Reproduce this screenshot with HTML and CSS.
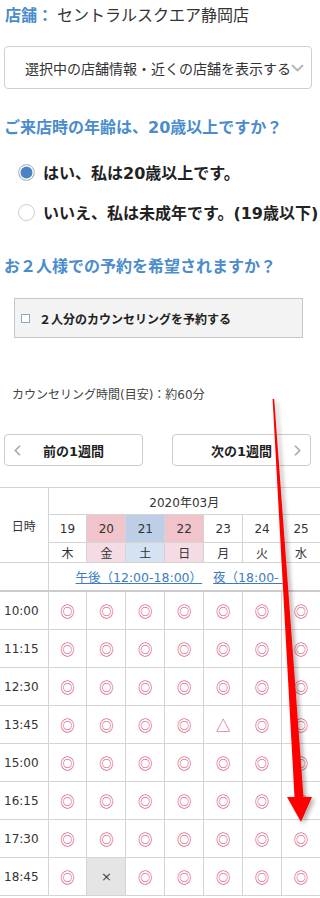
FILE: index.html
```html
<!DOCTYPE html>
<html lang="ja">
<head>
<meta charset="utf-8">
<title>予約</title>
<link rel="stylesheet" href="styles.css">
</head>
<body>
<div class="page">
  <div class="shop"><span class="shop-label">店舗：</span><span class="shop-name">セントラルスクエア静岡店</span></div>
  <div class="select"><span>選択中の店舗情報・近くの店舗を表示する</span><svg class="sel-chev" width="13" height="8" viewBox="0 0 13 8"><path d="M1 1.2 L6.5 6.5 L12 1.2" fill="none" stroke="#b0b0b0" stroke-width="1.8"/></svg></div>

  <h2 class="q">ご来店時の年齢は、20歳以上ですか？</h2>
  <label class="radio"><span class="radio-dot checked"></span>はい、私は20歳以上です。</label>
  <label class="radio"><span class="radio-dot"></span>いいえ、私は未成年です。(19歳以下)</label>

  <h2 class="q q2">お２人様での予約を希望されますか？</h2>
  <div class="pair"><span class="cb"></span>２人分のカウンセリングを予約する</div>

  <p class="note">カウンセリング時間(目安)：約60分</p>

  <div class="weeknav">
    <button class="wbtn"><svg class="chev" width="7" height="11" viewBox="0 0 7 11"><path d="M6 0.8 L1.3 5.5 L6 10.2" fill="none" stroke="#a8a8a8" stroke-width="1.6"/></svg><span class="wtxt">前の1週間</span><span></span></button>
    <button class="wbtn"><span></span><span class="wtxt">次の1週間</span><svg class="chev chev-r" width="7" height="11" viewBox="0 0 7 11"><path d="M1 0.8 L5.7 5.5 L1 10.2" fill="none" stroke="#a8a8a8" stroke-width="1.6"/></svg></button>
  </div>

  <table class="cal">
    <colgroup><col class="c-time"><col><col><col><col><col><col><col></colgroup>
    <tr class="r-month">
      <td class="hd-dt" rowspan="3">日時</td>
      <td class="month" colspan="7">2020年03月</td>
    </tr>
    <tr class="r-date">
      <td>19</td><td class="pk">20</td><td class="bl">21</td><td class="pk">22</td><td>23</td><td>24</td><td>25</td>
    </tr>
    <tr class="r-wd">
      <td>木</td><td class="pk2">金</td><td class="bl2">土</td><td class="pk2">日</td><td>月</td><td>火</td><td>水</td>
    </tr>
    <tr class="r-link">
      <td class="lk-empty"></td>
      <td class="lk" colspan="7"><div class="lk-in"><a href="#">午後（12:00-18:00）</a><a href="#" class="lk2">夜（18:00-&nbsp;</a></div></td>
    </tr>
    <tr class="r-slot"><th>10:00</th><td>◎</td><td>◎</td><td>◎</td><td>◎</td><td>◎</td><td>◎</td><td>◎</td></tr>
    <tr class="r-slot"><th>11:15</th><td>◎</td><td>◎</td><td>◎</td><td>◎</td><td>◎</td><td>◎</td><td>◎</td></tr>
    <tr class="r-slot"><th>12:30</th><td>◎</td><td>◎</td><td>◎</td><td>◎</td><td>◎</td><td>◎</td><td>◎</td></tr>
    <tr class="r-slot"><th>13:45</th><td>◎</td><td>◎</td><td>◎</td><td>◎</td><td class="tri">△</td><td>◎</td><td>◎</td></tr>
    <tr class="r-slot"><th>15:00</th><td>◎</td><td>◎</td><td>◎</td><td>◎</td><td>◎</td><td>◎</td><td>◎</td></tr>
    <tr class="r-slot"><th>16:15</th><td>◎</td><td>◎</td><td>◎</td><td>◎</td><td>◎</td><td>◎</td><td>◎</td></tr>
    <tr class="r-slot"><th>17:30</th><td>◎</td><td>◎</td><td>◎</td><td>◎</td><td>◎</td><td>◎</td><td>◎</td></tr>
    <tr class="r-slot"><th>18:45</th><td>◎</td><td class="full">×</td><td>◎</td><td>◎</td><td>◎</td><td>◎</td><td>◎</td></tr>
  </table>
</div>

<svg class="arrow" width="320" height="898" viewBox="0 0 320 898">
  <defs>
    <filter id="sh" x="-100%" y="-10%" width="300%" height="120%">
      <feGaussianBlur in="SourceAlpha" stdDeviation="2"/>
      <feOffset dx="3" dy="2" result="b"/>
      <feComponentTransfer><feFuncA type="linear" slope="0.3"/></feComponentTransfer>
      <feMerge><feMergeNode/><feMergeNode in="SourceGraphic"/></feMerge>
    </filter>
  </defs>
  <polygon fill="#ff0000" filter="url(#sh)" points="272.6,399 274.2,399 303.5,797 312,797 301,822 287,797 294.5,797"/>
</svg>
</body>
</html>
```

FILE: styles.css
```css
html, body {
  margin: 0;
  padding: 0;
}
body {
  width: 320px;
  overflow: hidden;
  position: relative;
  font-family: "DejaVu Sans", "Noto Sans CJK JP", sans-serif;
  color: #333;
  background: #fff;
}
.page {
  width: 320px;
}
.shop {
  height: 28px;
  line-height: 28px;
  font-size: 16px;
  padding-left: 5px;
  white-space: nowrap;
  font-family: "Noto Sans CJK JP", sans-serif;
}
.shop-label {
  color: #4a8ccd;
  font-weight: bold;
  margin-right: 4px;
}
.shop-name {
  color: #333;
}
.select {
  margin: 18px 0 0 4px;
  width: 308px;
  height: 43px;
  box-sizing: border-box;
  border: 1px solid #cfcfcf;
  border-radius: 4px;
  display: flex;
  align-items: center;
  padding-left: 20px;
  font-size: 14px;
  color: #333;
  white-space: nowrap;
  font-family: "Noto Sans CJK JP", sans-serif;
}
.sel-chev {
  margin-left: 0;
  margin-top: 1px;
  flex: none;
}
.q {
  margin: 27px 0 0 4px;
  font-size: 16px;
  line-height: 24px;
  color: #4a8ccd;
  font-weight: bold;
  white-space: nowrap;
}
.q2 {
  margin-top: 31px;
}
.radio {
  display: flex;
  align-items: center;
  height: 24px;
  margin-top: 20px;
  padding-left: 18px;
  font-size: 16px;
  font-weight: bold;
  color: #222;
  white-space: nowrap;
}
.radio + .radio {
  margin-top: 16px;
}
.radio-dot {
  flex: none;
  width: 17px;
  height: 17px;
  box-sizing: border-box;
  border: 1px solid #cccccc;
  border-radius: 50%;
  margin-right: 8px;
  background: #fff;
}
.radio-dot.checked {
  border-color: #c4c4c4;
  background: #4a84c4;
  box-shadow: inset 0 0 0 1.5px #fff;
}
.pair {
  margin: 19px 0 0 14px;
  width: 289px;
  height: 40px;
  box-sizing: border-box;
  background: #f3f3f3;
  border: 1px solid #c6c6c6;
  display: flex;
  align-items: center;
  padding-left: 6px;
  font-size: 12px;
  font-weight: bold;
  color: #222;
  white-space: nowrap;
  font-family: "Noto Sans CJK JP", sans-serif;
}
.cb {
  flex: none;
  width: 9px;
  height: 9px;
  box-sizing: border-box;
  border: 1px solid #8ea8cc;
  background: #fff;
  margin-right: 9px;
}
.note {
  margin: 47px 0 0 12px;
  font-size: 12px;
  line-height: 20px;
  color: #444;
  white-space: nowrap;
}
.weeknav {
  display: flex;
  gap: 29px;
  margin: 29px 0 0 4px;
}
.wbtn {
  width: 139px;
  height: 32px;
  box-sizing: border-box;
  border: 1px solid #cccccc;
  border-radius: 4px;
  background: #fff;
  padding: 0 9px;
  display: grid;
  grid-template-columns: 1fr auto 1fr;
  align-items: center;
  font-family: "DejaVu Sans", "Noto Sans CJK JP", sans-serif;
  font-size: 13px;
  font-weight: bold;
  color: #222;
}
.chev {
  justify-self: start;
}
.chev-r {
  justify-self: end;
}
.cal {
  margin-top: 21px;
  border-collapse: collapse;
  table-layout: fixed;
  width: 321px;
  font-size: 12px;
  color: #333;
}
.c-time {
  width: 48px;
}
.cal td, .cal th {
  border: 1px solid #d4d4d4;
  padding: 0;
  text-align: center;
  font-weight: normal;
}
.cal tr > :first-child {
  border-left: none;
}
.r-month td {
  height: 26px;
}
.hd-dt {
  font-family: "Noto Sans CJK JP", sans-serif;
  font-size: 12px;
}
.month {
  font-size: 12px;
}
.r-date td {
  height: 27px;
  font-size: 12px;
}
.r-wd td {
  height: 19px;
  font-family: "Noto Sans CJK JP", sans-serif;
  font-size: 12px;
  line-height: 16px;
}
.pk { background: #f1c4cc; }
.bl { background: #bccfe6; }
.pk2 { background: #f5dbe3; }
.bl2 { background: #d4e2f1; }
.r-link td {
  height: 27px;
  border-bottom: 2px solid #cccccc;
}
.lk {
  text-align: left !important;
}
.lk-in {
  white-space: nowrap;
  overflow: hidden;
  padding-left: 27px;
  font-size: 12.5px;
}
.lk-in a {
  color: #3d7cc0;
  text-decoration: underline;
}
.lk2 {
  margin-left: 11px;
}
.r-slot th, .r-slot td {
  height: 37px;
}
.r-slot th {
  text-align: left;
  padding-left: 4px;
  font-size: 12px;
  color: #333;
}
.r-slot td {
  font-family: "Noto Sans CJK JP", sans-serif;
  font-size: 14.5px;
  color: #d8436a;
}
.r-slot td.tri {
  color: #d8436a;
}
.r-slot td.full {
  background: #e5e5e5;
  color: #444;
  font-family: "DejaVu Sans", sans-serif;
  font-size: 13px;
}
.arrow {
  position: absolute;
  top: 0;
  left: 0;
  pointer-events: none;
}
```
